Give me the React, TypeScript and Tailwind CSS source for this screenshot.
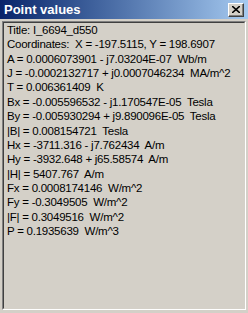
const lines = [
  "Title: I_6694_d550",
  "Coordinates:  X = -197.5115, Y = 198.6907",
  "A = 0.0006073901 - j7.03204E-07  Wb/m",
  "J = -0.0002132717 + j0.0007046234  MA/m^2",
  "T = 0.006361409  K",
  "Bx = -0.005596532 - j1.170547E-05  Tesla",
  "By = -0.005930294 + j9.890096E-05  Tesla",
  "|B| = 0.008154721  Tesla",
  "Hx = -3711.316 - j7.762434  A/m",
  "Hy = -3932.648 + j65.58574  A/m",
  "|H| = 5407.767  A/m",
  "Fx = 0.0008174146  W/m^2",
  "Fy = -0.3049505  W/m^2",
  "|F| = 0.3049516  W/m^2",
  "P = 0.1935639  W/m^3",
];

export default function App() {
  return (
    <div
      className="flex h-[313px] w-[248px] flex-col overflow-hidden bg-[#d4d0c8]"
      style={{ fontFamily: '"Liberation Sans", Arial, sans-serif' }}
    >
      <div className="flex h-[19px] shrink-0 items-center justify-between bg-gradient-to-r from-[#0a246a] to-[#a6caf0] pl-[4px] pr-[4px]">
        <span className="text-[13px] font-bold leading-none text-white">Point values</span>
        <button className="flex h-[14px] w-[16px] items-center justify-center border border-t-white border-l-white border-r-[#404040] border-b-[#404040] bg-[#d4d0c8] shadow-[inset_-1px_-1px_0_#808080]">
          <svg width="8" height="7" viewBox="0 0 8 7">
            <path d="M0 0 L8 7 M8 0 L0 7" stroke="#000" strokeWidth="1.6" />
          </svg>
        </button>
      </div>
      <div className="mx-[2px] mb-[3px] mt-[2px] flex-1 border border-t-[#808080] border-l-[#808080] border-r-white border-b-white">
        <div className="h-full border border-t-[#404040] border-l-[#404040] border-r-[#d4d0c8] border-b-[#d4d0c8] pl-[3px]">
          {lines.map((l) => (
            <div key={l} className="whitespace-pre text-[11.5px] leading-[14.36px] tracking-[-0.25px] text-black">
              {l}
            </div>
          ))}
        </div>
      </div>
    </div>
  );
}
